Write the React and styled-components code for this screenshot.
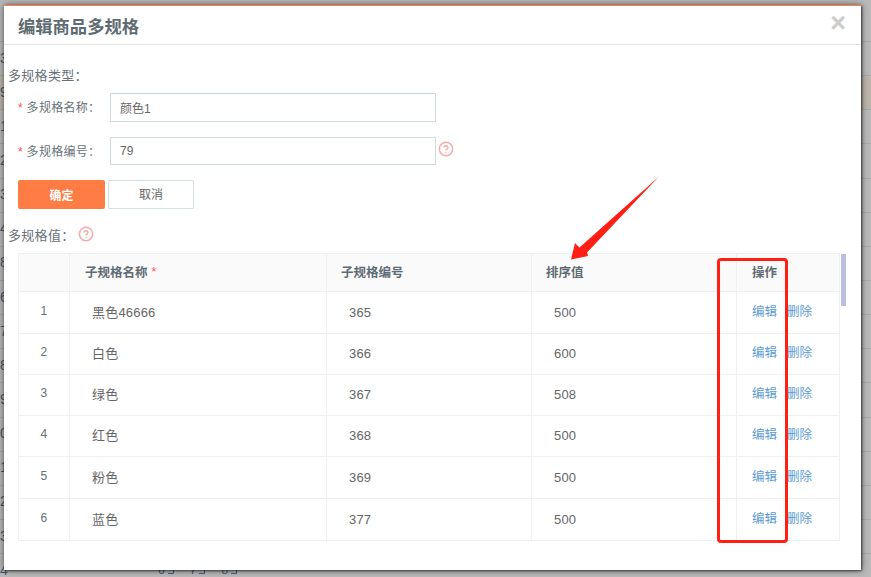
import React from "react";
import styled, { createGlobalStyle } from "styled-components";
import { CircleHelp } from "lucide-react";

const GlobalStyle = createGlobalStyle`
  html, body {
    margin: 0;
    padding: 0;
  }
  body {
    font-family: "Liberation Sans", "Noto Sans CJK SC", sans-serif;
  }
`;

const backdropDigits = ["3", "9", "1", "2", "3", "4", "8", "6", "7", "8", "9", "0", "1", "2", "3", "4"];

const rows = [
  { id: 1, name: "黑色46666", code: "365", sort: "500", height: 42 },
  { id: 2, name: "白色", code: "366", sort: "600", height: 41 },
  { id: 3, name: "绿色", code: "367", sort: "508", height: 41 },
  { id: 4, name: "红色", code: "368", sort: "500", height: 41 },
  { id: 5, name: "粉色", code: "369", sort: "500", height: 42 },
  { id: 6, name: "蓝色", code: "377", sort: "500", height: 42 },
];

function App() {
  return (
    <Page>
      <GlobalStyle />
      <Backdrop>
        {backdropDigits.map((digit, i) => (
          <BackRow key={i} $tinted={i === 1}>
            <BackDigit>{digit}</BackDigit>
            {i === backdropDigits.length - 1 && (
              <Pager>
                {["6", "7", "8"].map((n) => (
                  <PagerItem key={n}>
                    {n}
                    <svg width="7" height="11" viewBox="0 0 7 11" fill="none" stroke="currentColor">
                      <path d="M0 9.5h5.5V4" />
                    </svg>
                  </PagerItem>
                ))}
              </Pager>
            )}
          </BackRow>
        ))}
      </Backdrop>

      <Modal>
        <Header>
          <Title>编辑商品多规格</Title>
          <Close>×</Close>
        </Header>
        <Body>
          <SectionLabel>多规格类型：</SectionLabel>
          <FormRow>
            <FieldLabel>
              <Star>*</Star> 多规格名称：
            </FieldLabel>
            <Input defaultValue="颜色1" />
          </FormRow>
          <FormRow $second>
            <FieldLabel>
              <Star>*</Star> 多规格编号：
            </FieldLabel>
            <Input defaultValue="79" $short />
            <RowHelp size={16} strokeWidth={2.2} />
          </FormRow>
          <Buttons>
            <PrimaryButton>确定</PrimaryButton>
            <CancelButton>取消</CancelButton>
          </Buttons>
          <SectionLabel $values>
            多规格值：
            <Help size={16} strokeWidth={2.2} />
          </SectionLabel>
          <TableArea>
            <Table>
              <HeadRow>
                <HeadCell />
                <HeadCell>
                  子规格名称 <Star>*</Star>
                </HeadCell>
                <HeadCell>子规格编号</HeadCell>
                <HeadCell>排序值</HeadCell>
                <HeadCell>操作</HeadCell>
              </HeadRow>
              {rows.map((row) => (
                <Row key={row.id} $height={row.height}>
                  <IndexCell>{row.id}</IndexCell>
                  <NameCell>{row.name}</NameCell>
                  <Cell>{row.code}</Cell>
                  <Cell>{row.sort}</Cell>
                  <ActionCell>
                    <ActionLink>编辑</ActionLink>
                    <ActionLink>删除</ActionLink>
                  </ActionCell>
                </Row>
              ))}
            </Table>
            <ScrollThumb />
          </TableArea>
        </Body>
      </Modal>

      <RedBox />
      <Arrow viewBox="0 0 871 577">
        <polygon points="571,259.5 575,243 579.5,247.5 659,176.5 587,252.5 588,256" fill="#ff1f14" />
      </Arrow>
    </Page>
  );
}

const Page = styled.div`
  position: relative;
  width: 871px;
  height: 577px;
  overflow: hidden;
  background: #b9b9b9;
`;

const Backdrop = styled.div`
  padding-top: 41px;
`;

const BackRow = styled.div`
  box-sizing: border-box;
  height: 34.15px;
  display: flex;
  align-items: center;
  padding-bottom: 2px;
  border-top: 1px solid #aaaaaa;
  background: ${(p) => (p.$tinted ? "#bcb5ac" : "transparent")};
`;

const BackDigit = styled.span`
  width: 8px;
  font-size: 14px;
  color: #46566a;
`;

const Pager = styled.div`
  display: flex;
  gap: 15px;
  margin-left: 150px;
  font-size: 12px;
  color: #4d5a6a;
`;

const PagerItem = styled.span`
  display: flex;
  align-items: center;
  gap: 3px;
`;

const Modal = styled.div`
  position: absolute;
  left: 4px;
  top: 5px;
  box-sizing: border-box;
  width: 857px;
  height: 565px;
  background: #ffffff;
  border-top: 1px solid #ff7c45;
  box-shadow: 1px 1px 2px rgba(0, 0, 0, 0.55), 0 0 7px rgba(0, 0, 0, 0.55);
`;

const Header = styled.div`
  box-sizing: border-box;
  height: 39px;
  display: flex;
  align-items: center;
  justify-content: space-between;
  padding: 0 14px;
  border-bottom: 1px solid #e5e5e5;
`;

const Title = styled.h4`
  margin: 0;
  font-size: 17.3px;
  font-weight: bold;
  color: #5f6b73;
`;

const Close = styled.span`
  font-size: 27px;
  line-height: 28px;
  font-weight: bold;
  color: #cccccc;
  margin-right: 1px;
  margin-top: -5px;
`;

const Body = styled.div`
  padding: 20px 0 0 14px;
`;

const SectionLabel = styled.div`
  box-sizing: border-box;
  display: flex;
  align-items: center;
  height: 20px;
  margin-left: -10px;
  margin-top: ${(p) => (p.$values ? "16px" : "0")};
  padding-bottom: 2px;
  font-size: 13px;
  letter-spacing: 0.3px;
  color: #687178;
`;

const FormRow = styled.div`
  display: flex;
  align-items: center;
  margin-top: ${(p) => (p.$second ? "15px" : "8px")};
`;

const FieldLabel = styled.label`
  width: 92px;
  padding-bottom: 2px;
  font-size: 12px;
  letter-spacing: 0.3px;
  color: #687178;
  white-space: pre;
`;

const Star = styled.span`
  color: #ff4d4f;
  font-weight: normal;
`;

const Input = styled.input`
  box-sizing: border-box;
  width: 326px;
  height: ${(p) => (p.$short ? "28px" : "29px")};
  padding: 0 9px;
  border: 1px solid #d0dcdc;
  outline: none;
  font-family: inherit;
  font-size: 12px;
  color: #666666;
`;

const Help = styled(CircleHelp)`
  color: #f7a8a8;
  margin-left: 3px;
  flex: none;
`;

const RowHelp = styled(Help)`
  margin-left: 2px;
  margin-bottom: 4px;
`;

const Buttons = styled.div`
  display: flex;
  gap: 3px;
  margin-top: 15px;
`;

const PrimaryButton = styled.button`
  width: 87px;
  height: 29px;
  padding: 0;
  border: none;
  border-radius: 2px;
  background: #ff7c45;
  color: #ffffff;
  font-family: inherit;
  font-size: 12px;
  font-weight: bold;
`;

const CancelButton = styled.button`
  width: 86px;
  height: 29px;
  padding: 0 0 3px;
  border: 1px solid #d5e0e0;
  border-radius: 1px;
  background: #ffffff;
  color: #666666;
  font-family: inherit;
  font-size: 12px;
`;

const TableArea = styled.div`
  display: flex;
  align-items: flex-start;
  margin-top: 8px;
`;

const Table = styled.div`
  box-sizing: border-box;
  width: 822px;
  border-top: 1px solid #eef1f1;
  border-left: 1px solid #eef1f1;
`;

const HeadRow = styled.div`
  display: grid;
  grid-template-columns: 51px 257px 205px 205px 103px;
  height: 38px;
  background: #fafafa;
`;

const HeadCell = styled.div`
  box-sizing: border-box;
  display: flex;
  align-items: center;
  gap: 4px;
  padding-left: 15px;
  padding-bottom: 2px;
  border-right: 1px solid #eef1f1;
  border-bottom: 1px solid #eef1f1;
  font-size: 12.5px;
  font-weight: bold;
  color: #5f6b73;

  &:nth-child(3),
  &:nth-child(4) {
    padding-left: 14px;
  }
`;

const Row = styled.div`
  display: grid;
  grid-template-columns: 51px 257px 205px 205px 103px;
  height: ${(p) => p.$height}px;
`;

const Cell = styled.div`
  box-sizing: border-box;
  display: flex;
  align-items: center;
  padding-left: 22px;
  padding-bottom: 1px;
  border-right: 1px solid #eef1f1;
  border-bottom: 1px solid #eef1f1;
  font-size: 13px;
  letter-spacing: 0.2px;
  color: #666666;
`;

const NameCell = styled(Cell)`
  padding-bottom: 3px;
`;

const IndexCell = styled(Cell)`
  justify-content: center;
  padding-left: 0;
  padding-bottom: 4px;
  font-size: 12px;
  color: #667078;
`;

const ActionCell = styled(Cell)`
  gap: 10px;
  padding-left: 15px;
  padding-bottom: 5px;
  white-space: nowrap;
`;

const ActionLink = styled.a`
  font-size: 12.5px;
  letter-spacing: 0;
  color: #5b9bd5;
`;

const ScrollThumb = styled.div`
  width: 5px;
  height: 52px;
  margin-top: 1px;
  margin-left: 1px;
  background: #bdbddd;
`;

const RedBox = styled.div`
  position: absolute;
  left: 717px;
  top: 258px;
  box-sizing: border-box;
  width: 71px;
  height: 285px;
  border: 3px solid #ff1f14;
  border-radius: 4px;
`;

const Arrow = styled.svg`
  position: absolute;
  left: 0;
  top: 0;
  width: 871px;
  height: 577px;
  pointer-events: none;
`;

export default App;
